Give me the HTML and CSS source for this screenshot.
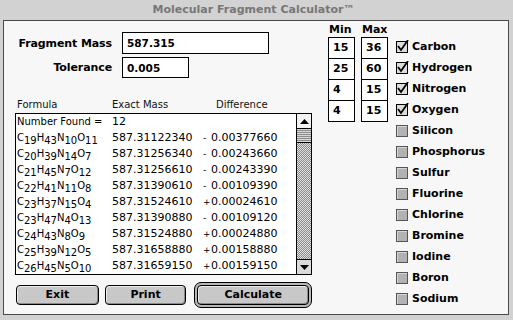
FILE: index.html
```html
<!DOCTYPE html>
<html>
<head>
<meta charset="utf-8">
<title>Molecular Fragment Calculator</title>
<link rel="stylesheet" href="styles.css">
</head>
<body>
<div class="titlebar">Molecular Fragment Calculator™</div>
<div class="panel">
  <div class="left">
    <div class="field-row"><span class="lbl">Fragment Mass</span><div class="input wide">587.315</div></div>
    <div class="field-row second"><span class="lbl">Tolerance</span><div class="input narrow">0.005</div></div>
    <div class="head"><span>Formula</span><span>Exact Mass</span><span>Difference</span></div>
    <div class="listbox">
      <div class="rows">
        <div class="row"><span class="nf">Number Found =</span><span>12</span><span></span></div>
        <div class="row"><span class="f">C<sub>19</sub>H<sub>43</sub>N<sub>10</sub>O<sub>11</sub></span><span>587.31122340</span><span><i>-</i>0.00377660</span></div>
        <div class="row"><span class="f">C<sub>20</sub>H<sub>39</sub>N<sub>14</sub>O<sub>7</sub></span><span>587.31256340</span><span><i>-</i>0.00243660</span></div>
        <div class="row"><span class="f">C<sub>21</sub>H<sub>45</sub>N<sub>7</sub>O<sub>12</sub></span><span>587.31256610</span><span><i>-</i>0.00243390</span></div>
        <div class="row"><span class="f">C<sub>22</sub>H<sub>41</sub>N<sub>11</sub>O<sub>8</sub></span><span>587.31390610</span><span><i>-</i>0.00109390</span></div>
        <div class="row"><span class="f">C<sub>23</sub>H<sub>37</sub>N<sub>15</sub>O<sub>4</sub></span><span>587.31524610</span><span><i>+</i>0.00024610</span></div>
        <div class="row"><span class="f">C<sub>23</sub>H<sub>47</sub>N<sub>4</sub>O<sub>13</sub></span><span>587.31390880</span><span><i>-</i>0.00109120</span></div>
        <div class="row"><span class="f">C<sub>24</sub>H<sub>43</sub>N<sub>8</sub>O<sub>9</sub></span><span>587.31524880</span><span><i>+</i>0.00024880</span></div>
        <div class="row"><span class="f">C<sub>25</sub>H<sub>39</sub>N<sub>12</sub>O<sub>5</sub></span><span>587.31658880</span><span><i>+</i>0.00158880</span></div>
        <div class="row"><span class="f">C<sub>26</sub>H<sub>45</sub>N<sub>5</sub>O<sub>10</sub></span><span>587.31659150</span><span><i>+</i>0.00159150</span></div>
      </div>
      <div class="scrollbar">
        <div class="arrow up"><svg width="9" height="5" viewBox="0 0 9 5"><polygon points="4.5,0 9,5 0,5" fill="#000"/></svg></div>
        <div class="thumb"></div>
        <div class="track"></div>
        <div class="arrow down"><svg width="9" height="5" viewBox="0 0 9 5"><polygon points="0,0 9,0 4.5,5" fill="#000"/></svg></div>
      </div>
    </div>
    <div class="buttons">
      <div class="btn exit">Exit</div>
      <div class="btn print">Print</div>
      <div class="ring"><div class="btn calc">Calculate</div></div>
    </div>
  </div>
  <div class="right">
    <div class="minmax">
      <div class="mmcol">
        <div class="mmhead">Min</div>
        <div class="cell">15</div>
        <div class="cell">25</div>
        <div class="cell">4</div>
        <div class="cell">4</div>
      </div>
      <div class="mmcol">
        <div class="mmhead">Max</div>
        <div class="cell">36</div>
        <div class="cell">60</div>
        <div class="cell">15</div>
        <div class="cell">15</div>
      </div>
    </div>
    <div class="checks">
      <div class="check"><span class="box on"><svg width="13" height="13" viewBox="0 0 13 13"><polyline points="2,6 5,10 12,0" fill="none" stroke="#000" stroke-width="1.8"/></svg></span>Carbon</div>
      <div class="check"><span class="box on"><svg width="13" height="13" viewBox="0 0 13 13"><polyline points="2,6 5,10 12,0" fill="none" stroke="#000" stroke-width="1.8"/></svg></span>Hydrogen</div>
      <div class="check"><span class="box on"><svg width="13" height="13" viewBox="0 0 13 13"><polyline points="2,6 5,10 12,0" fill="none" stroke="#000" stroke-width="1.8"/></svg></span>Nitrogen</div>
      <div class="check"><span class="box on"><svg width="13" height="13" viewBox="0 0 13 13"><polyline points="2,6 5,10 12,0" fill="none" stroke="#000" stroke-width="1.8"/></svg></span>Oxygen</div>
      <div class="check"><span class="box off"></span>Silicon</div>
      <div class="check"><span class="box off"></span>Phosphorus</div>
      <div class="check"><span class="box off"></span>Sulfur</div>
      <div class="check"><span class="box off"></span>Fluorine</div>
      <div class="check"><span class="box off"></span>Chlorine</div>
      <div class="check"><span class="box off"></span>Bromine</div>
      <div class="check"><span class="box off"></span>Iodine</div>
      <div class="check"><span class="box off"></span>Boron</div>
      <div class="check"><span class="box off"></span>Sodium</div>
    </div>
  </div>
</div>
</body>
</html>
```
FILE: styles.css
```css
* { box-sizing: border-box; margin: 0; padding: 0; }
html, body { width: 513px; height: 320px; overflow: hidden; }
body {
  background: #d2d2d2;
  font-family: "DejaVu Sans", sans-serif;
  color: #000;
}
.titlebar {
  height: 20px;
  line-height: 20px;
  text-align: center;
  font-weight: bold;
  font-size: 11px;
  color: #777;
  padding-right: 6px;
}
.panel {
  margin-left: 3px;
  width: 506px;
  height: 295px;
  border: 1px solid #4a4a4a;
  background: #f7f7f7;
  display: flex;
  gap: 16px;
  padding: 1px 0 0 11px;
}
.left {
  width: 297px;
  padding-top: 10px;
  display: flex;
  flex-direction: column;
}
.field-row {
  display: flex;
  align-items: center;
  gap: 10px;
  height: 22px;
}
.field-row.second { margin-top: 3px; height: 21px; }
.lbl {
  width: 97px;
  text-align: right;
  font-weight: bold;
  font-size: 11px;
  letter-spacing: -0.1px;
  white-space: nowrap;
}
.input {
  height: 100%;
  border: 1px solid #000;
  background: #fff;
  font-weight: bold;
  font-size: 10.5px;
  padding-left: 4px;
  display: flex;
  align-items: center;
}
.input.wide { width: 147px; }
.input.narrow { width: 67px; }
.head {
  margin-top: 19px;
  height: 15px;
  line-height: 15px;
  font-size: 10px;
  display: grid;
  grid-template-columns: 95px 104px 1fr;
  padding-left: 2px;
  color: #111;
}
.listbox {
  margin-top: 1px;
  height: 162px;
  border: 1px solid #000;
  background: #fff;
  display: flex;
}
.rows { flex: 1; padding-left: 1px; }
.row {
  height: 16px;
  line-height: 16px;
  font-size: 11px;
  display: grid;
  grid-template-columns: 95px 91px 1fr;
  white-space: nowrap;
}
.row .nf { font-size: 10px; }
.row .f { font-size: 10px; }
.row sub { font-size: 10px; vertical-align: -3px; line-height: 0; }
.row i { font-style: normal; font-size: 9px; display: inline-block; width: 8px; }
.scrollbar {
  width: 15px;
  border-left: 1px solid #000;
  display: flex;
  flex-direction: column;
}
.arrow {
  height: 15px;
  display: flex;
  align-items: center;
  justify-content: center;
}
.arrow.up { border-bottom: 1px solid #000; background: #f2f2f2; }
.arrow.down { border-top: 1px solid #000; background: #dadada; }
.thumb {
  height: 14px;
  border-bottom: 1px solid #000;
  background:
    repeating-linear-gradient(to bottom, #d8d8d8 0 1px, #8c8c8c 1px 2px);
}
.track {
  flex: 1;
  background: repeating-conic-gradient(#8a8a8a 0 25%, #e0e0e0 0 50%) 0 0 / 2px 2px;
}
.buttons {
  margin-top: 7px;
  display: flex;
  align-items: center;
}
.btn {
  height: 20px;
  border: 1px solid #000;
  border-radius: 4px;
  background: #c8c8c8;
  box-shadow: inset 1px 1px 0 #ececec, inset -1px -1px 0 #8a8a8a;
  font-weight: bold;
  font-size: 11px;
  line-height: 18px;
  text-align: center;
}
.exit { width: 83px; margin-left: 1px; }
.print { width: 82px; margin-left: 6px; }
.ring {
  margin-left: 8px;
  width: 118px;
  height: 26px;
  border: 1px solid #000;
  border-radius: 7px;
  padding: 2px;
  background: #b8b8b8;
}
.calc { width: 100%; }
.right {
  display: flex;
  gap: 8px;
}
.minmax { display: flex; gap: 6px; }
.mmcol { width: 27px; }
.mmhead {
  height: 15px;
  line-height: 15px;
  font-weight: bold;
  font-size: 11px;
  padding-left: 1px;
}
.cell {
  height: 22px;
  border: 1px solid #000;
  background: #fff;
  font-weight: bold;
  font-size: 11px;
  line-height: 20px;
  padding-left: 4px;
}
.cell + .cell { margin-top: -1px; }
.checks { margin-top: 14px; }
.check {
  height: 21px;
  display: flex;
  align-items: center;
  gap: 4px;
  font-weight: bold;
  font-size: 11px;
  white-space: nowrap;
}
.box {
  width: 12px;
  height: 12px;
  position: relative;
  flex: none;
}
.box.on {
  border: 1px solid #000;
  background: #dcdcdc;
}
.box.on svg { position: absolute; left: -1px; top: -2px; }
.box.off {
  border: 1px solid #555;
  background: #b2b2b2;
  box-shadow: inset 1px 1px 0 #d6d6d6;
}
```
